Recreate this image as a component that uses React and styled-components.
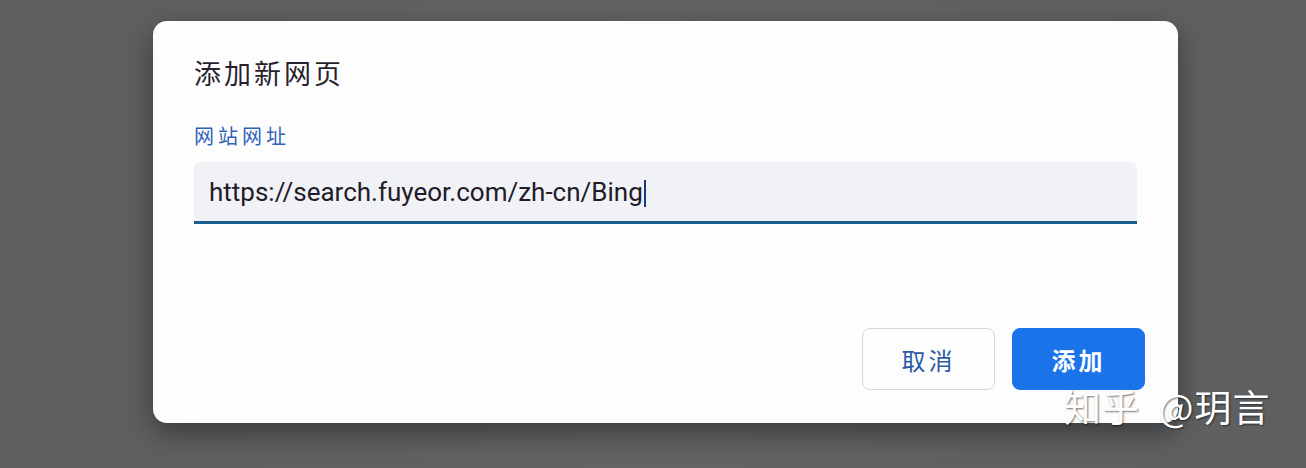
import React from "react";
import styled, { createGlobalStyle } from "styled-components";

const GlobalStyle = createGlobalStyle`
  html, body {
    margin: 0;
    padding: 0;
  }
  body {
    font-family: Roboto, "Noto Sans CJK SC", sans-serif;
  }
`;

const Backdrop = styled.div`
  position: relative;
  width: 1306px;
  height: 468px;
  box-sizing: border-box;
  padding: 21px 0 0 153px;
  background: linear-gradient(90deg, #5d5e5f 0%, #626364 50%, #5e5f60 100%);
  overflow: hidden;
`;

const Dialog = styled.div`
  width: 1025px;
  height: 402px;
  box-sizing: border-box;
  padding: 35px 41px 33px 41px;
  background: #fdfdfe;
  border-radius: 14px;
  box-shadow: 0 10px 28px rgba(0, 0, 0, 0.4);
  display: flex;
  flex-direction: column;
`;

const Title = styled.h2`
  margin: 0;
  font-family: "Noto Sans CJK SC", sans-serif;
  font-weight: 400;
  font-size: 27px;
  line-height: 34px;
  letter-spacing: 3px;
  color: #2a1f2e;
`;

const Label = styled.label`
  margin-top: 34px;
  font-family: "Noto Sans CJK SC", sans-serif;
  font-size: 20px;
  line-height: 24px;
  letter-spacing: 4px;
  color: #2f63b8;
`;

const Field = styled.div`
  margin-top: 14px;
  height: 62px;
  box-sizing: border-box;
  padding: 0 15px;
  display: flex;
  align-items: center;
  background: #f0f2f5;
  border-radius: 6px 6px 0 0;
  border-bottom: 3px solid #1a5f8f;
`;

const Value = styled.span`
  font-family: Roboto, sans-serif;
  font-size: 26px;
  color: #231a2a;
`;

const Caret = styled.span`
  display: inline-block;
  width: 2px;
  height: 27px;
  margin-left: 1px;
  vertical-align: -6px;
  background: #1f3b7a;
`;

const Actions = styled.div`
  margin-top: auto;
  margin-right: -8px;
  display: flex;
  justify-content: flex-end;
  gap: 17px;
`;

const Button = styled.button`
  width: 133px;
  height: 62px;
  border-radius: 8px;
  font-family: "Noto Sans CJK SC", sans-serif;
  font-size: 24px;
  letter-spacing: 3px;
  cursor: pointer;
  border: 1px solid ${(p) => (p.$primary ? "#1a73e8" : "#d4d6da")};
  background: ${(p) => (p.$primary ? "#1a73e8" : "#fdfdfe")};
  color: ${(p) => (p.$primary ? "#ffffff" : "#2a5aa8")};
  font-weight: ${(p) => (p.$primary ? 700 : 400)};
`;

const Watermark = styled.div`
  position: absolute;
  left: 1064px;
  top: 382px;
  font-family: "Noto Sans CJK SC", sans-serif;
  font-size: 37px;
  line-height: 48px;
  color: #ffffff;
  letter-spacing: 1px;
  text-shadow: 1px 1px 2px rgba(0, 0, 0, 0.55);
  white-space: pre;
`;

const App = () => {
  return (
    <Backdrop>
      <GlobalStyle />
      <Dialog>
        <Title>添加新网页</Title>
        <Label>网站网址</Label>
        <Field>
          <Value>
            https://search.fuyeor.com/zh-cn/Bing
            <Caret />
          </Value>
        </Field>
        <Actions>
          <Button>取消</Button>
          <Button $primary>添加</Button>
        </Actions>
      </Dialog>
      <Watermark>{"知乎  @玥言"}</Watermark>
    </Backdrop>
  );
};

export default App;
